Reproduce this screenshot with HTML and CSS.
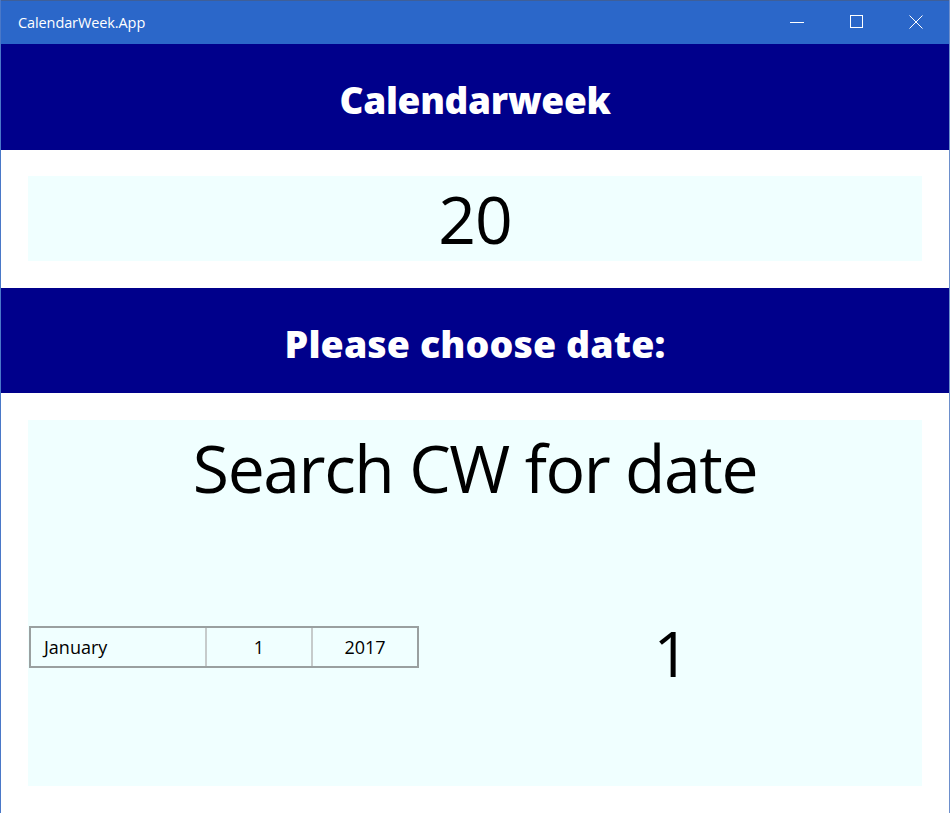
FILE: index.html
```html
<!DOCTYPE html>
<html>
<head>
<meta charset="utf-8">
<title>CalendarWeek.App</title>
<link rel="stylesheet" href="styles.css">
</head>
<body>
<div class="window">
  <div class="titlebar">
    <span class="app-title">CalendarWeek.App</span>
    <div class="controls">
      <span class="ctl">
        <svg width="14" height="14" viewBox="0 0 14 14"><line x1="0" y1="7.5" x2="14" y2="7.5" stroke="#fff" stroke-width="1"/></svg>
      </span>
      <span class="ctl">
        <svg width="14" height="14" viewBox="0 0 14 14"><rect x="0.5" y="0.5" width="12" height="12" fill="none" stroke="#fff" stroke-width="1"/></svg>
      </span>
      <span class="ctl">
        <svg width="14" height="14" viewBox="0 0 14 14"><path d="M0.5 0.5 L13.5 13.5 M13.5 0.5 L0.5 13.5" stroke="#fff" stroke-width="1"/></svg>
      </span>
    </div>
  </div>
  <div class="content">
    <div class="band">Calendarweek</div>
    <div class="panel week-panel">20</div>
    <div class="band band-choose">Please choose date:</div>
    <div class="panel search-panel">
      <div class="search-title">Search CW for date</div>
      <div class="search-row">
        <div class="picker">
          <div class="cell month">January</div>
          <div class="cell day">1</div>
          <div class="cell year">2017</div>
        </div>
        <div class="result">1</div>
      </div>
    </div>
  </div>
</div>
</body>
</html>
```

FILE: styles.css
```css
* { box-sizing: border-box; }
html, body {
  margin: 0;
  padding: 0;
  width: 950px;
  height: 813px;
  overflow: hidden;
  background: #ffffff;
  font-family: "Open Sans", "Noto Sans", sans-serif;
}
.window {
  width: 950px;
  height: 813px;
  display: flex;
  flex-direction: column;
  border-left: 1px solid #4a78c8;
  border-right: 1px solid #6d8fcc;
}
.titlebar {
  height: 44px;
  flex: none;
  background: #2b67c9;
  border-top: 1px solid #3f5f98;
  display: flex;
  align-items: center;
  justify-content: space-between;
  color: #ffffff;
}
.app-title {
  font-size: 14.5px;
  padding-left: 17px;
  padding-bottom: 1px;
  letter-spacing: -0.1px;
}
.controls {
  display: flex;
  height: 100%;
}
.ctl {
  width: 60px;
  display: flex;
  align-items: center;
  justify-content: center;
  padding-bottom: 1px;
}
.ctl:last-child { width: 62px; padding-right: 4px; }
.content {
  flex: 1;
  display: flex;
  flex-direction: column;
}
.band {
  background: #00008b;
  color: #ffffff;
  font-weight: 800;
  font-size: 37px;
  display: flex;
  align-items: center;
  justify-content: center;
  letter-spacing: -0.3px;
  height: 106px;
  margin-bottom: 26px;
  padding-top: 4px;
}
.band-choose {
  height: 105px;
  margin-bottom: 27px;
  padding-top: 6px;
  font-size: 37.5px;
  letter-spacing: 0.1px;
}
.panel {
  background: #f0ffff;
  margin: 0 27px;
}
.week-panel {
  height: 85px;
  margin-bottom: 27px;
  display: flex;
  align-items: center;
  justify-content: center;
  font-size: 66px;
  color: #000;
  padding-bottom: 1px;
  letter-spacing: -1px;
}
.search-panel {
  height: 366px;
  display: flex;
  flex-direction: column;
}
.search-title {
  text-align: center;
  font-size: 66px;
  line-height: 1;
  padding-top: 14px;
  color: #000;
  letter-spacing: -1.4px;
}
.search-row {
  flex: 1;
  display: flex;
  align-items: center;
  padding-top: 8px;
}
.picker {
  margin-left: 1px;
  width: 390px;
  height: 42px;
  border: 2px solid #9aa0a0;
  display: flex;
  font-size: 18px;
  color: #000;
}
.cell {
  display: flex;
  align-items: center;
  padding-bottom: 1px;
}
.month { width: 176px; padding-left: 13px; border-right: 2px solid #c6cbcb; }
.day { width: 106px; justify-content: center; border-right: 2px solid #c6cbcb; }
.year { flex: 1; justify-content: center; }
.result {
  flex: 1;
  text-align: center;
  font-size: 63px;
  color: #000;
  padding-top: 10px;
  padding-left: 2px;
}
```
